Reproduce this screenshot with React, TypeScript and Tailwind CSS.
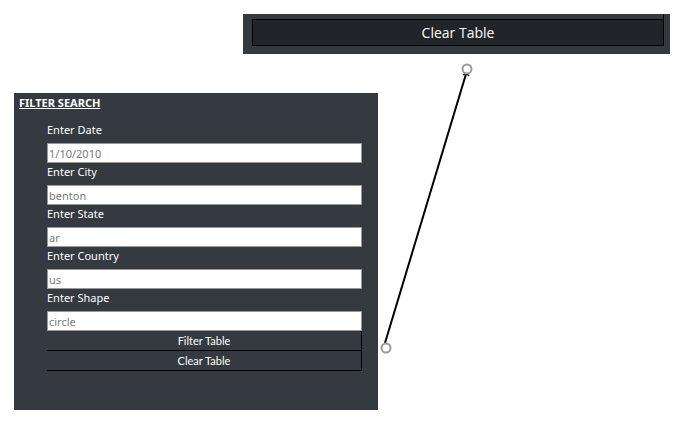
import React from "react";

const fields = [
  { label: "Enter Date", value: "1/10/2010" },
  { label: "Enter City", value: "benton" },
  { label: "Enter State", value: "ar" },
  { label: "Enter Country", value: "us" },
  { label: "Enter Shape", value: "circle" },
];

export default function App() {
  return (
    <div className="relative w-[681px] h-[429px] bg-white overflow-hidden font-['Noto_Sans',sans-serif]">
      {/* top snippet */}
      <div className="absolute left-[243px] top-[14px] w-[427px] h-[40px] bg-[#343a40] pl-[9px] pr-[6px] flex flex-col">
        <div className="h-[5px] border-r border-black" />
        <button className="h-[27px] bg-[#212529] border border-black text-white text-[14px] font-['Open_Sans',sans-serif] leading-none">
          Clear Table
        </button>
      </div>

      {/* filter panel */}
      <div className="absolute left-[14px] top-[93px] w-[364px] h-[317px] bg-[#343a40]">
        <div className="pl-[5px] h-[19px] text-[11px] font-bold text-white underline leading-[19px]">
          FILTER SEARCH
        </div>
        <div className="pl-[33px] pr-[16px] pt-[9px] flex flex-col">
          {fields.map((f) => (
            <div key={f.label} className="flex flex-col">
              <label className="text-[11px] text-white leading-[18px] pb-[4px]">{f.label}</label>
              <input
                placeholder={f.value}
                className="h-[20px] bg-white border border-[#9a9a9a] px-[1px] text-[11px] placeholder:text-[#7a7a7a] outline-none"
              />
            </div>
          ))}
          <button className="h-[20px] border-r border-b border-black text-white text-[11px] font-['Lato',sans-serif] leading-none">
            Filter Table
          </button>
          <button className="h-[20px] border-r border-b border-black text-white text-[11px] font-['Lato',sans-serif] leading-none">
            Clear Table
          </button>
        </div>
      </div>

      {/* connector arrow */}
      <svg className="absolute inset-0 pointer-events-none" width="681" height="429">
        <line x1="385" y1="343" x2="466" y2="74" stroke="#000" strokeWidth="2" />
        <path d="M463,75 L466,73 L469,76" fill="none" stroke="#000" strokeWidth="1.5" />
        <circle cx="386" cy="348" r="4.5" fill="#fff" stroke="#999" strokeWidth="2" />
        <circle cx="467" cy="69" r="4.5" fill="#fff" stroke="#999" strokeWidth="2" />
      </svg>
    </div>
  );
}
